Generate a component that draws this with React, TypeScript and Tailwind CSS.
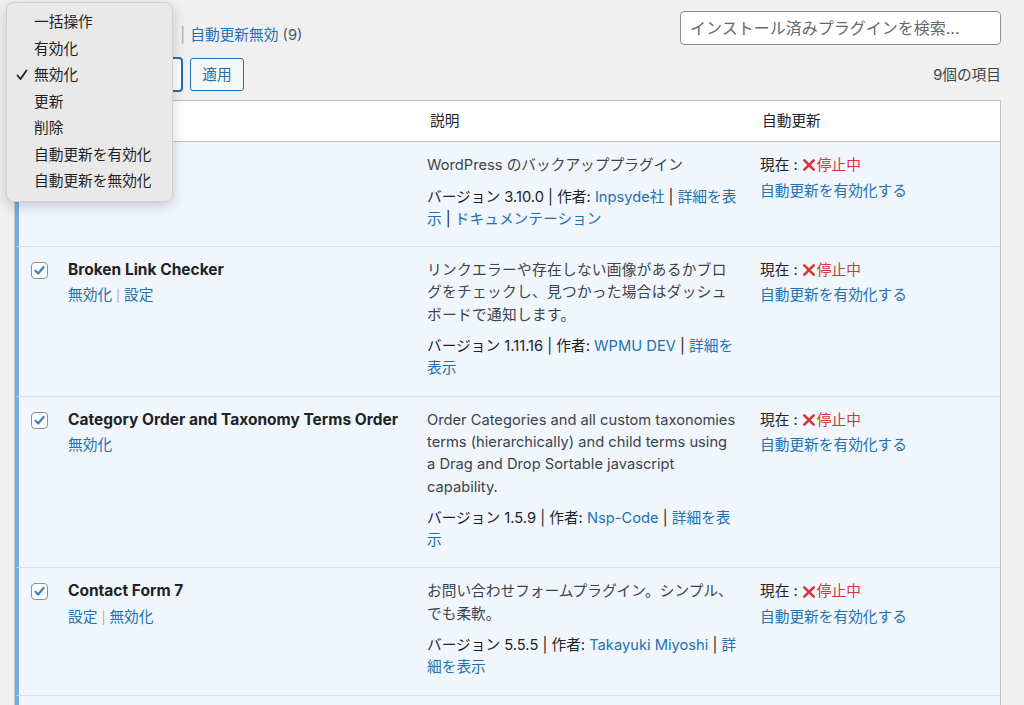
import React from "react";

type Plugin = {
  name: string;
  actions: string[];
  desc: string;
  descClass?: string;
  version: string;
  author: string;
  links: string[];
};

const plugins: Plugin[] = [
  {
    name: "BackWPup",
    actions: ["無効化", "設定"],
    desc: "WordPress のバックアッププラグイン",
    version: "3.10.0",
    author: "Inpsyde社",
    links: ["詳細を表示", "ドキュメンテーション"],
  },
  {
    name: "Broken Link Checker",
    actions: ["無効化", "設定"],
    desc: "リンクエラーや存在しない画像があるかブログをチェックし、見つかった場合はダッシュボードで通知します。",
    descClass: "tracking-[0.3px]",
    version: "1.11.16",
    author: "WPMU DEV",
    links: ["詳細を表示"],
  },
  {
    name: "Category Order and Taxonomy Terms Order",
    actions: ["無効化"],
    desc: "Order Categories and all custom taxonomies terms (hierarchically) and child terms using a Drag and Drop Sortable javascript capability.",
    version: "1.5.9",
    author: "Nsp-Code",
    links: ["詳細を表示"],
  },
  {
    name: "Contact Form 7",
    actions: ["設定", "無効化"],
    desc: "お問い合わせフォームプラグイン。シンプル、でも柔軟。",
    version: "5.5.5",
    author: "Takayuki Miyoshi",
    links: ["詳細を表示"],
  },
  {
    name: "Contact Form 7 add confirm",
    actions: ["無効化"],
    desc: "Add confirm step to Contact Form 7.",
    version: "5.1",
    author: "Yoshiaki Kato",
    links: ["詳細を表示"],
  },
];

const menuItems = [
  "一括操作",
  "有効化",
  "無効化",
  "更新",
  "削除",
  "自動更新を有効化",
  "自動更新を無効化",
];

const Checkbox = () => (
  <div className="w-[17px] h-[17px] rounded-[4px] border border-[#8c8f94] bg-white flex items-center justify-center">
    <svg width="13" height="13" viewBox="0 0 13 13">
      <path d="M2.5 6.8 L5.2 9.5 L10.6 3" fill="none" stroke="#3582c4" strokeWidth="2.2" strokeLinecap="round" strokeLinejoin="round" />
    </svg>
  </div>
);

const Sep = () => <span className="text-[#a7aaad] text-[12px] mx-[4px]">|</span>;

const PluginRow = ({ p }: { p: Plugin }) => (
  <div className="flex border-l-4 border-[#72aee6] bg-[#f0f6fc] border-b border-b-[#dcdfe3] pt-[12px] pb-[16px]">
    <div className="w-[49px] pl-[12px] pt-[3px]">
      <Checkbox />
    </div>
    <div className="w-[349px] pr-[10px]">
      <div className="font-bold text-[15.5px] text-[#1d2327] leading-[22.3px]">{p.name}</div>
      <div className="mt-[3px] text-[#2271b1]">
        {p.actions.map((a, i) => (
          <span key={a}>
            {i > 0 && <Sep />}
            {a}
          </span>
        ))}
      </div>
    </div>
    <div className="w-[333px] pl-[10px] pr-[12px]">
      <p className={`text-[#3c434a] ${p.descClass ?? ""}`}>{p.desc}</p>
      <p className="mt-[9px] text-[#1d2327]">
        バージョン {p.version} | 作者: <span className="text-[#2271b1]">{p.author}</span>
        {p.links.map((l) => (
          <span key={l}>
            {" | "}
            <span className="text-[#2271b1]">{l}</span>
          </span>
        ))}
      </p>
    </div>
    <div className="flex-1 pl-[10px]">
      <div className="flex items-center text-[#1d2327]">
        <span>現在 : </span>
        <svg width="14" height="14" viewBox="0 0 14 14" className="ml-[4px] mr-[1px]">
          <path d="M2.3 2.3 L11.7 11.7 M11.7 2.3 L2.3 11.7" stroke="#d63638" strokeWidth="2.6" strokeLinecap="round" />
        </svg>
        <span className="text-[#d63638]">停止中</span>
      </div>
      <div className="mt-[3px] text-[#2271b1]">自動更新を有効化する</div>
    </div>
  </div>
);

export default function App() {
  return (
    <div className="relative min-h-[705px] h-[705px] overflow-hidden bg-[#f0f0f1] font-[Inter,'Noto_Sans_CJK_JP',sans-serif] text-[14.7px] leading-[22.3px] text-[#3c434a]">
      <div className="pl-[14px] pr-[23px] pt-[11px]">
        <div className="flex justify-between items-start">
          <div className="pt-[13px] text-[#50575e]">
            <span className="text-[#1d2327] font-semibold">すべて</span> (9)
            <span className="ml-[9px] mr-[9px] text-[#a7aaad]">|</span>
            <span className="text-[#2271b1]">使用中</span> (9)
            <span className="ml-[9px] mr-[5px] text-[#a7aaad]">|</span>
            <span className="text-[#2271b1]">自動更新無効</span> (9)
          </div>
          <div className="w-[321px] h-[34px] rounded-[4px] border border-[#8c8f94] bg-white flex items-center pl-[9px] text-[16px] text-[#646970]">
            インストール済みプラグインを検索...
          </div>
        </div>

        <div className="mt-[11px] h-[35px] flex items-center justify-between">
          <div className="flex items-center">
            <div className="w-[169px] h-[35px] rounded-[4px] border-2 border-[#2271b1] bg-white flex items-center pl-[8px] text-[#2c3338]">
              一括操作
            </div>
            <div className="ml-[7px] w-[54px] h-[33px] rounded-[3px] border border-[#2271b1] bg-[#f6f7f7] text-[#2271b1] flex items-center justify-center">
              適用
            </div>
          </div>
          <div className="text-[#3c434a]">9個の項目</div>
        </div>

        <div className="mt-[8px] border border-[#c3c4c7] border-b-0">
          <div className="flex h-[41px] items-center bg-white border-b border-[#c3c4c7] border-l-4 border-l-white text-[#1d2327]">
            <div className="w-[49px] pl-[12px]">
              <Checkbox />
            </div>
            <div className="w-[349px]">プラグイン</div>
            <div className="w-[333px] pl-[13px]">説明</div>
            <div className="flex-1 pl-[12px]">自動更新</div>
          </div>
          {plugins.map((p) => (
            <PluginRow key={p.name} p={p} />
          ))}
        </div>
      </div>

      <div className="absolute left-[6px] top-[2px] w-[167px] rounded-[8px] border border-[#cfcfcf] bg-[#e9e9e9] shadow-[0_4px_14px_rgba(0,0,0,0.18)] py-[6px] text-[#1f1f1f]">
        {menuItems.map((m) => (
          <div key={m} className="relative h-[26.5px] flex items-center pl-[27px]">
            {m === "無効化" && (
              <svg width="12" height="12" viewBox="0 0 12 12" className="absolute left-[9px]">
                <path d="M1.5 6.5 L4.5 10 L10.5 1.5" fill="none" stroke="#222" strokeWidth="1.8" strokeLinecap="round" strokeLinejoin="round" />
              </svg>
            )}
            {m}
          </div>
        ))}
      </div>
    </div>
  );
}
